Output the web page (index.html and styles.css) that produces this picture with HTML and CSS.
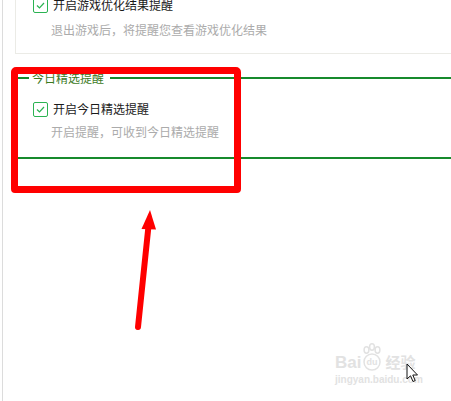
FILE: index.html
```html
<!DOCTYPE html>
<html lang="zh-CN">
<head>
    <meta charset="UTF-8">
    <meta name="viewport" content="width=device-width, initial-scale=1.0">
    <title>提醒设置</title>
    <link rel="stylesheet" href="styles.css">
</head>
<body>
    <div class="window">
        <!-- 游戏优化结果 -->
        <div class="panel">
            <label class="check-row">
                <span class="checkbox">
                    <svg width="13" height="13" viewBox="0 0 13 13"><polyline points="3,6.5 5.5,9 10,4" fill="none" stroke="#2bb352" stroke-width="1.2"/></svg>
                </span>
                <span class="check-text">开启游戏优化结果提醒</span>
            </label>
            <p class="hint">退出游戏后，将提醒您查看游戏优化结果</p>
        </div>

        <!-- 今日精选 -->
        <div class="section">
            <div class="section-title">
                <span class="line line-short"></span>
                <span class="legend">今日精选提醒</span>
                <span class="line line-long"></span>
            </div>
            <div class="section-body">
                <label class="check-row">
                    <span class="checkbox">
                        <svg width="13" height="13" viewBox="0 0 13 13"><polyline points="3,6.5 5.5,9 10,4" fill="none" stroke="#2bb352" stroke-width="1.2"/></svg>
                    </span>
                    <span class="check-text">开启今日精选提醒</span>
                </label>
                <p class="hint">开启提醒，可收到今日精选提醒</p>
            </div>
        </div>
    </div>

    <!-- 标注 -->
    <div class="mark-box"></div>
    <svg class="mark-arrow" width="451" height="401" viewBox="0 0 451 401">
        <line x1="138" y1="327" x2="148.5" y2="226" stroke="#ff0000" stroke-width="6" stroke-linecap="round"/>
        <polygon points="150,210 141.5,229 156,229.5" fill="#ff0000"/>
    </svg>

    <div class="watermark">
        <div class="wm-top">
            <span class="wm-bai">Bai</span>
            <svg class="wm-paw" width="20" height="28" viewBox="0 0 20 28">
                <ellipse cx="4.5" cy="7" rx="2.4" ry="3.2" fill="none" stroke="#e2e2e2" stroke-width="1.5"/>
                <ellipse cx="10" cy="4" rx="2.4" ry="3.2" fill="none" stroke="#e2e2e2" stroke-width="1.5"/>
                <ellipse cx="15.5" cy="7" rx="2.4" ry="3.2" fill="none" stroke="#e2e2e2" stroke-width="1.5"/>
                <circle cx="10" cy="19" r="8" fill="none" stroke="#e2e2e2" stroke-width="1.5"/>
                <text x="10" y="22" text-anchor="middle" font-family="Liberation Sans, sans-serif" font-size="9" font-weight="bold" fill="#e2e2e2">du</text>
            </svg>
            <span class="wm-jy">经验</span>
        </div>
        <div class="wm-url">jingyan.baidu.com</div>
    </div>

    <svg class="cursor" width="14" height="21" viewBox="0 0 14 21">
        <path d="M1,1 L1,16 L4.5,12.8 L7,18.5 L9.2,17.6 L6.8,12 L11.5,12 Z" fill="#fff" stroke="#111" stroke-width="1"/>
    </svg>
</body>
</html>
```

FILE: styles.css
```css
body {
    margin: 0;
    background-color: #fff;
    font-family: "Noto Sans CJK SC", "Noto Sans", sans-serif;
    font-size: 12px;
    overflow: hidden;
}
.window {
    margin-left: 2px;
    padding-left: 12px;
    border-left: 1px solid #dcdcdc;
    min-height: 440px;
    box-sizing: border-box;
}
.panel {
    margin-top: -20px;
    padding: 17px 0 15px 17px;
    border-left: 1px solid #ebebe6;
    border-bottom: 1px solid #ebebe6;
}
.check-row {
    display: flex;
    align-items: center;
    height: 16px;
}
.checkbox {
    width: 13px;
    height: 13px;
    border: 1px solid #2bb352;
    border-radius: 2px;
    display: flex;
    align-items: center;
    justify-content: center;
    margin-right: 5px;
}
.check-text {
    color: #1a1a1a;
    line-height: 16px;
}
.hint {
    margin: 9px 0 0 18px;
    color: #ababab;
    line-height: 16px;
}
.section {
    margin-top: 17px;
}
.section-title {
    display: flex;
    align-items: center;
    height: 14px;
}
.line {
    height: 2px;
    background-color: #178a2c;
}
.line-short {
    width: 14px;
}
.line-long {
    flex: 1;
}
.legend {
    padding: 0 6px 0 3px;
    color: #3c7a1e;
    line-height: 14px;
}
.section-body {
    padding: 16px 0 17px 18px;
    border-bottom: 2px solid #178a2c;
}
.section-body .hint {
    margin-top: 7px;
}
.mark-box {
    position: absolute;
    left: 11px;
    top: 67px;
    width: 230px;
    height: 126px;
    box-sizing: border-box;
    border: 7px solid #ff0000;
    border-radius: 5px 5px 4px 4px;
}
.mark-arrow {
    position: absolute;
    left: 0;
    top: 0;
}
.watermark {
    position: absolute;
    left: 335px;
    top: 341px;
    color: #e2e2e2;
}
.wm-top {
    display: flex;
    align-items: flex-end;
    height: 30px;
}
.wm-bai {
    font-family: "Liberation Sans", sans-serif;
    font-size: 17px;
    font-weight: bold;
    line-height: 17px;
}
.wm-paw {
    margin: 0 3px 0 1px;
}
.wm-jy {
    font-size: 15px;
    line-height: 18px;
    font-weight: bold;
}
.wm-url {
    font-family: "Liberation Sans", sans-serif;
    font-size: 10px;
    font-weight: bold;
    line-height: 14px;
    margin-top: 2px;
}
.cursor {
    position: absolute;
    left: 406px;
    top: 363px;
}
```
